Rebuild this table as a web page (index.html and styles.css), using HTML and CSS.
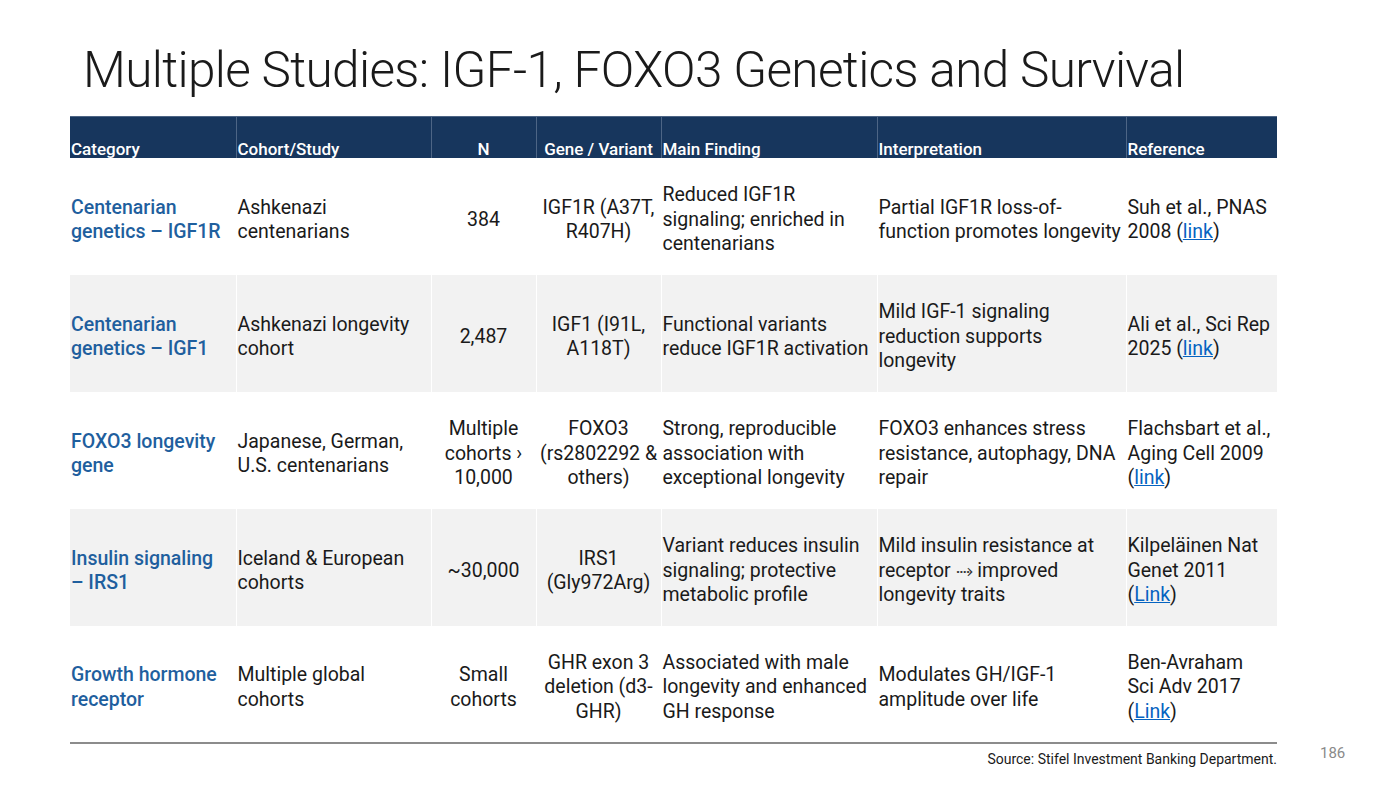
FILE: index.html
```html
<!DOCTYPE html>
<html lang="en">
<head>
<meta charset="utf-8">
<title>Multiple Studies: IGF-1, FOXO3 Genetics and Survival</title>
<link rel="stylesheet" href="styles.css">
</head>
<body>
<div class="slide">
  <h1 class="title">Multiple Studies: IGF-1, FOXO3 Genetics and Survival</h1>
  <table class="grid">
    <colgroup>
      <col class="c1"><col class="c2"><col class="c3"><col class="c4"><col class="c5"><col class="c6"><col class="c7">
    </colgroup>
    <thead>
      <tr>
        <th>Category</th>
        <th>Cohort/Study</th>
        <th class="center">N</th>
        <th class="center">Gene / Variant</th>
        <th>Main Finding</th>
        <th>Interpretation</th>
        <th>Reference</th>
      </tr>
    </thead>
    <tbody>
      <tr>
        <td class="cat">Centenarian genetics – IGF1R</td>
        <td>Ashkenazi centenarians</td>
        <td class="center">384</td>
        <td class="center">IGF1R (A37T, R407H)</td>
        <td>Reduced IGF1R signaling; enriched in centenarians</td>
        <td>Partial IGF1R loss-of-function promotes longevity</td>
        <td>Suh et al., PNAS 2008 (<a href="#">link</a>)</td>
      </tr>
      <tr class="alt">
        <td class="cat">Centenarian genetics – IGF1</td>
        <td>Ashkenazi longevity cohort</td>
        <td class="center">2,487</td>
        <td class="center">IGF1 (I91L, A118T)</td>
        <td>Functional variants reduce IGF1R activation</td>
        <td>Mild IGF-1 signaling reduction supports longevity</td>
        <td>Ali et al., Sci Rep 2025 (<a href="#">link</a>)</td>
      </tr>
      <tr>
        <td class="cat">FOXO3 longevity gene</td>
        <td>Japanese, German, U.S. centenarians</td>
        <td class="center">Multiple cohorts › 10,000</td>
        <td class="center">FOXO3 (rs2802292 &amp; others)</td>
        <td>Strong, reproducible association with exceptional longevity</td>
        <td>FOXO3 enhances stress resistance, autophagy, DNA repair</td>
        <td>Flachsbart et al., Aging Cell 2009 (<a href="#">link</a>)</td>
      </tr>
      <tr class="alt">
        <td class="cat">Insulin signaling <span class="keep">– IRS1</span></td>
        <td>Iceland &amp; European cohorts</td>
        <td class="center">~30,000</td>
        <td class="center">IRS1 (Gly972Arg)</td>
        <td>Variant reduces insulin signaling; protective metabolic profile</td>
        <td>Mild insulin resistance at receptor <span class="arrow">⤑</span> improved longevity traits</td>
        <td>Kilpeläinen Nat Genet 2011 (<a href="#">Link</a>)</td>
      </tr>
      <tr>
        <td class="cat">Growth hormone receptor</td>
        <td>Multiple global cohorts</td>
        <td class="center">Small cohorts</td>
        <td class="center">GHR exon 3 deletion (d3-GHR)</td>
        <td>Associated with male longevity and enhanced GH response</td>
        <td>Modulates GH/IGF-1 amplitude over life</td>
        <td>Ben-Avraham <span class="keep">Sci Adv</span> 2017 (<a href="#">Link</a>)</td>
      </tr>
    </tbody>
  </table>
  <div class="footer">
    <div class="source">Source: Stifel Investment Banking Department.</div>
    <div class="page">186</div>
  </div>
</div>
</body>
</html>
```

FILE: styles.css
```css
html, body {
  margin: 0;
  padding: 0;
  background: #ffffff;
}
body {
  font-family: Roboto, "Noto Sans", "DejaVu Sans", sans-serif;
  color: #1a1a1a;
}
.slide {
  width: 1400px;
  height: 788px;
  padding: 0 0 0 70px;
  box-sizing: border-box;
  overflow: hidden;
}
.title {
  margin: 0;
  padding: 38px 0 0 13px;
  height: 78px;
  font-family: Roboto, sans-serif;
  font-weight: 300;
  font-size: 49.5px;
  line-height: 64px;
  letter-spacing: -0.65px;
  color: #1a1a1a;
  white-space: nowrap;
}
.grid {
  width: 1207px;
  border-collapse: collapse;
  table-layout: fixed;
  border-bottom: 2px solid #8c8c8c;
}
.c1 { width: 166px; }
.c2 { width: 195px; }
.c3 { width: 105px; }
.c4 { width: 125px; }
.c5 { width: 216px; }
.c6 { width: 249px; }
.c7 { width: 151px; }
.grid th {
  background: #17365d;
  color: #ffffff;
  font-weight: 500;
  font-size: 17px;
  line-height: 18px;
  height: 41px;
  box-sizing: border-box;
  padding: 0 1px 0 1px;
  vertical-align: bottom;
  text-align: left;
  border-left: 1px solid #4d6585;
  border-top: 1px solid #4d6585;
  white-space: nowrap;
}
.grid th:first-child { border-left: none; }
.grid td {
  font-size: 19.5px;
  line-height: 24.5px;
  height: 117px;
  box-sizing: border-box;
  padding: 8px 1px 0 1px;
  vertical-align: middle;
  text-align: left;
  border-left: 1px solid #ffffff;
}
.grid td:first-child { border-left: none; }
.grid tr.alt td { background: #f2f2f2; }
.grid .center { text-align: center; }
.grid td.cat {
  color: #1f5f9e;
  font-weight: 500;
}
.keep { white-space: nowrap; }
.grid a {
  color: #0563c1;
  text-decoration: underline;
}
.arrow {
  font-family: "DejaVu Sans", sans-serif;
  font-size: 21px;
  line-height: 20px;
  color: #333333;
}
.footer {
  width: 1277px;
  display: flex;
  justify-content: flex-end;
  align-items: flex-start;
}
.source {
  width: 1207px;
  text-align: right;
  font-size: 14px;
  line-height: 16px;
  padding-top: 7px;
  color: #1a1a1a;
}
.page {
  width: 70px;
  padding-left: 43px;
  box-sizing: border-box;
  font-size: 15px;
  line-height: 18px;
  color: #8a8a8a;
  padding-top: 0;
}
```
